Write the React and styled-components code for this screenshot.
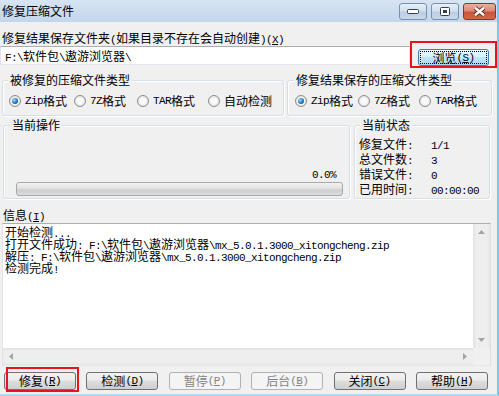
import styled, { createGlobalStyle } from "styled-components";

const GlobalStyle = createGlobalStyle`
  html, body { margin: 0; padding: 0; background: #f0f0f0; }
  body {
    font-family: "Noto Sans CJK SC", "Liberation Sans", sans-serif;
    font-size: 12px;
    color: #000;
  }
`;

const Window = styled.div`
  width: 499px;
  height: 396px;
  box-sizing: border-box;
  border-right: 2px solid #79c5ee;
  border-bottom: 2px solid #a9daf4;
  background: #f0f0f0;
  display: flex;
  flex-direction: column;
  overflow: hidden;
`;

const TitleBar = styled.div`
  height: 22px;
  flex: none;
  display: flex;
  align-items: flex-start;
  padding-left: 2px;
  background: linear-gradient(#d6e4f3, #c4d6eb);
`;

const Title = styled.div`
  flex: 1;
  line-height: 22px;
`;

const Caption = styled.div`
  display: flex;
  gap: 4px;
  margin-top: 3px;
  margin-right: 1px;
`;

const CapBtn = styled.div`
  width: ${(p) => p.$w}px;
  height: 17px;
  box-sizing: border-box;
  border: 1px solid ${(p) => (p.$close ? "#8b3526" : "#7890b0")};
  border-radius: 3px;
  background: ${(p) =>
    p.$close
      ? "linear-gradient(#eab0a2, #dc8a76 45%, #c9553b 55%, #d0674c)"
      : "linear-gradient(#e8eff8, #d3e0ef 45%, #bccde3 55%, #c9d9ec)"};
  display: flex;
  align-items: center;
  justify-content: center;
`;

const Client = styled.div`
  flex: 1;
  display: flex;
  flex-direction: column;
`;

const FieldLabel = styled.div`
  line-height: 14px;
  height: 14px;
  margin-top: ${(p) => p.$mt}px;
  padding-left: ${(p) => p.$pl}px;
  white-space: nowrap;
`;

// SimSun-style half width latin run: 6px per glyph, kept out of the line box height
const Latin = styled.span`
  font-family: "Liberation Mono", monospace;
  font-size: 11px;
  letter-spacing: -0.6px;
  line-height: 0;
`;

const PathRow = styled.div`
  display: flex;
  align-items: flex-start;
  height: 19px;
  margin-top: 1px;
`;

const PathInput = styled.div`
  width: 410px;
  height: 19px;
  flex: none;
  box-sizing: border-box;
  background: #fff;
  border: 1px solid;
  border-color: #abadb3 #e3e9ef #e3e9ef #e2e3ea;
  padding-left: 4px;
  line-height: 17px;
  white-space: nowrap;
`;

const Marked = styled.span`
  position: relative;
  display: inline-flex;
  flex: none;
  margin-left: ${(p) => p.$ml || 0}px;
  margin-top: ${(p) => p.$mt || 0}px;
  &::after {
    content: "";
    position: absolute;
    top: ${(p) => p.$t}px;
    left: ${(p) => p.$l}px;
    right: ${(p) => p.$r}px;
    bottom: ${(p) => p.$b}px;
    border: 2px solid #e8141c;
    pointer-events: none;
  }
`;

const Button = styled.button`
  width: ${(p) => p.$w || 72}px;
  height: ${(p) => p.$h || 18}px;
  flex: none;
  box-sizing: border-box;
  margin: 0;
  padding: 0;
  border: 1px solid #707070;
  border-radius: 3px;
  background: linear-gradient(#f2f2f2, #ebebeb 45%, #dddddd 50%, #cfcfcf);
  font-family: "Noto Sans CJK SC", sans-serif;
  font-size: 12px;
  line-height: 14px;
  color: #000;
  display: flex;
  align-items: center;
  justify-content: center;
  &:disabled {
    border-color: #adb2b5;
    background: #f4f4f4;
    color: #838383;
  }
  ${(p) =>
    p.$focus &&
    `
    border-color: #3c7fb1;
    background: linear-gradient(#eaf6fd, #d9f0fc 45%, #bee6fd 50%, #a7d9f5);
    outline: 1px dotted #000;
    outline-offset: -3px;
  `}
`;

const GroupRow = styled.div`
  display: flex;
  align-items: stretch;
  margin-top: ${(p) => p.$mt}px;
  padding-left: ${(p) => p.$pl}px;
`;

const GroupBox = styled.div`
  box-sizing: border-box;
  width: ${(p) => p.$w}px;
  margin-left: ${(p) => p.$ml || 0}px;
  padding-bottom: ${(p) => p.$pb || 0}px;
  border: 1px solid #d5dfe5;
  border-radius: 3px;
  box-shadow: inset 1px 1px 0 #fff, 1px 1px 0 #fff;
  display: flex;
  flex-direction: column;
`;

const Legend = styled.div`
  align-self: flex-start;
  margin-top: -8px;
  margin-left: ${(p) => p.$ml}px;
  padding: 0 2px;
  background: #f0f0f0;
  line-height: 14px;
  height: 14px;
  white-space: nowrap;
`;

const RadioRow = styled.div`
  display: flex;
  margin-top: 7px;
  padding-left: ${(p) => p.$pl}px;
  line-height: 14px;
  height: 14px;
`;

const RadioItem = styled.span`
  display: flex;
  align-items: center;
  flex: none;
  width: ${(p) => (p.$w ? `${p.$w}px` : "auto")};
  white-space: nowrap;
`;

const RadioDot = styled.span`
  width: 12px;
  height: 12px;
  box-sizing: border-box;
  margin-right: 4px;
  border-radius: 50%;
  border: 1px solid #8d8d8d;
  background: radial-gradient(circle, #fafafa 0 35%, #d6d6d6 100%);
  display: flex;
  align-items: center;
  justify-content: center;
  &::after {
    content: "";
    display: ${(p) => (p.$on ? "block" : "none")};
    width: 6px;
    height: 6px;
    border-radius: 50%;
    background: radial-gradient(circle at 35% 35%, #a8ddfb, #1b77c2 55%, #0a3c74);
  }
`;

const Percent = styled.div`
  margin-top: 34px;
  padding-right: 13px;
  line-height: 14px;
  height: 14px;
  text-align: right;
`;

const Progress = styled.div`
  height: 14px;
  box-sizing: border-box;
  margin: 2px 6px 0 12px;
  border: 1px solid #a9a9a9;
  border-radius: 3px;
  background: linear-gradient(#f2f2f2, #e4e4e4 40%, #cfcfcf 60%, #dcdcdc);
`;

const StatusGrid = styled.div`
  display: grid;
  grid-template-columns: 72px auto;
  grid-auto-rows: 15px;
  margin-top: 4px;
  padding-left: 4px;
  line-height: 15px;
  white-space: nowrap;
`;

const InfoBox = styled.div`
  margin: 1px 0 0 2px;
  width: 489px;
  height: 143px;
  flex: none;
  box-sizing: border-box;
  border: 1px solid;
  border-color: #abadb3 #dbdfe6 #e3e9ef #e2e3ea;
  background: #fff;
  display: grid;
  grid-template-columns: 1fr 17px;
  grid-template-rows: 1fr 17px;
`;

const InfoText = styled.div`
  padding: 2px 0 0 2px;
  line-height: 12px;
  white-space: pre;
  overflow: hidden;
`;

const InfoLine = styled.div`
  height: 12px;
`;

const ScrollBar = styled.div`
  background: ${(p) =>
    p.$vertical
      ? "linear-gradient(to right, #e2e2e2, #eeeeee 20%, #eeeeee 80%, #e6e6e6)"
      : "linear-gradient(#e2e2e2, #eeeeee 20%, #eeeeee 80%, #e6e6e6)"};
  display: flex;
  flex-direction: ${(p) => (p.$vertical ? "column" : "row")};
  justify-content: space-between;
  align-items: center;
  padding: ${(p) => (p.$vertical ? "6px 0" : "0 6px")};
  box-sizing: border-box;
`;

const Corner = styled.div`
  background: #f0f0f0;
`;

const ButtonRow = styled.div`
  display: flex;
  gap: 10.4px;
  margin-top: 6px;
  padding-left: 4px;
`;

function SimText({ children }) {
  return children
    .split(/([\x00-\xff]+)/)
    .filter(Boolean)
    .map((part, i) =>
      /[\x00-\xff]/.test(part) ? <Latin key={i}>{part}</Latin> : <span key={i}>{part}</span>
    );
}

function Key({ k }) {
  return (
    <Latin>
      (<u>{k}</u>)
    </Latin>
  );
}

function Arrow({ dir }) {
  const shapes = {
    up: "0,4 3.5,0 7,4",
    down: "0,0 7,0 3.5,4",
    left: "4,0 4,7 0,3.5",
    right: "0,0 0,7 4,3.5",
  };
  const vertical = dir === "up" || dir === "down";
  return (
    <svg width={vertical ? 7 : 4} height={vertical ? 4 : 7}>
      <polygon points={shapes[dir]} fill="#a3a3a3" />
    </svg>
  );
}

const info = [
  "开始检测...",
  "打开文件成功: F:\\软件包\\遨游浏览器\\mx_5.0.1.3000_xitongcheng.zip",
  "解压: F:\\软件包\\遨游浏览器\\mx_5.0.1.3000_xitongcheng.zip",
  "检测完成!",
];

const status = [
  ["修复文件:", "1/1"],
  ["总文件数:", "3"],
  ["错误文件:", "0"],
  ["已用时间:", "00:00:00"],
];

export default function App() {
  return (
    <>
      <GlobalStyle />
      <Window>
        <TitleBar>
          <Title>修复压缩文件</Title>
          <Caption>
            <CapBtn $w={28}>
              <svg width="12" height="5">
                <rect x="0.5" y="0.5" width="11" height="4" rx="1" fill="#fff" stroke="#2e3f57" />
              </svg>
            </CapBtn>
            <CapBtn $w={28}>
              <svg width="10" height="9">
                <rect x="0.5" y="0.5" width="9" height="8" rx="1" fill="#fff" stroke="#2e3f57" />
                <rect x="3" y="3" width="4" height="3" fill="#2e3f57" />
              </svg>
            </CapBtn>
            <CapBtn $w={33} $close>
              <svg width="15" height="11" viewBox="0 0 15 11">
                <path d="M3 1.8 L12 9.2 M12 1.8 L3 9.2" stroke="#5a2219" strokeWidth="4.2" />
                <path d="M3 1.8 L12 9.2 M12 1.8 L3 9.2" stroke="#fff" strokeWidth="2.4" />
              </svg>
            </CapBtn>
          </Caption>
        </TitleBar>

        <Client>
          <FieldLabel $mt={9} $pl={2}>
            <SimText>修复结果保存文件夹(如果目录不存在会自动创建)</SimText>
            <Key k="X" />
          </FieldLabel>

          <PathRow>
            <PathInput>
              <SimText>{"F:\\软件包\\遨游浏览器\\"}</SimText>
            </PathInput>
            <Marked $ml={8} $mt={3} $t={-8} $l={-8} $r={-8} $b={-2}>
              <Button $w={71} $h={17} $focus>
                浏览<Key k="S" />
              </Button>
            </Marked>
          </PathRow>

          <GroupRow $mt={15} $pl={2}>
            <GroupBox $w={282} $pb={7}>
              <Legend $ml={5}>被修复的压缩文件类型</Legend>
              <RadioRow $pl={6}>
                <RadioItem $w={65}>
                  <RadioDot $on />
                  <SimText>Zip格式</SimText>
                </RadioItem>
                <RadioItem $w={63}>
                  <RadioDot />
                  <SimText>7Z格式</SimText>
                </RadioItem>
                <RadioItem $w={71}>
                  <RadioDot />
                  <SimText>TAR格式</SimText>
                </RadioItem>
                <RadioItem>
                  <RadioDot />
                  自动检测
                </RadioItem>
              </RadioRow>
            </GroupBox>
            <GroupBox $w={205} $ml={3} $pb={7}>
              <Legend $ml={6}>修复结果保存的压缩文件类型</Legend>
              <RadioRow $pl={7}>
                <RadioItem $w={63}>
                  <RadioDot $on />
                  <SimText>Zip格式</SimText>
                </RadioItem>
                <RadioItem $w={61}>
                  <RadioDot />
                  <SimText>7Z格式</SimText>
                </RadioItem>
                <RadioItem>
                  <RadioDot />
                  <SimText>TAR格式</SimText>
                </RadioItem>
              </RadioRow>
            </GroupBox>
          </GroupRow>

          <GroupRow $mt={9} $pl={3}>
            <GroupBox $w={347} $pb={2}>
              <Legend $ml={6}>当前操作</Legend>
              <Percent>
                <SimText>0.0%</SimText>
              </Percent>
              <Progress />
            </GroupBox>
            <GroupBox $w={136} $ml={4}>
              <Legend $ml={5}>当前状态</Legend>
              <StatusGrid>
                {status.flatMap(([label, value]) => [
                  <span key={label}>
                    <SimText>{label}</SimText>
                  </span>,
                  <span key={label + "v"}>
                    <SimText>{value}</SimText>
                  </span>,
                ])}
              </StatusGrid>
            </GroupBox>
          </GroupRow>

          <FieldLabel $mt={9} $pl={3}>
            信息<Key k="I" />
          </FieldLabel>

          <InfoBox>
            <InfoText>
              {info.map((line) => (
                <InfoLine key={line}>
                  <SimText>{line}</SimText>
                </InfoLine>
              ))}
            </InfoText>
            <ScrollBar $vertical>
              <Arrow dir="up" />
              <Arrow dir="down" />
            </ScrollBar>
            <ScrollBar>
              <Arrow dir="left" />
              <Arrow dir="right" />
            </ScrollBar>
            <Corner />
          </InfoBox>

          <ButtonRow>
            <Marked $t={-5} $l={2} $r={-3} $b={-2}>
              <Button>
                修复<Key k="R" />
              </Button>
            </Marked>
            <Button>
              检测<Key k="D" />
            </Button>
            <Button disabled>
              暂停<Key k="P" />
            </Button>
            <Button disabled>
              后台<Key k="B" />
            </Button>
            <Button>
              关闭<Key k="C" />
            </Button>
            <Button>
              帮助<Key k="H" />
            </Button>
          </ButtonRow>
        </Client>
      </Window>
    </>
  );
}
